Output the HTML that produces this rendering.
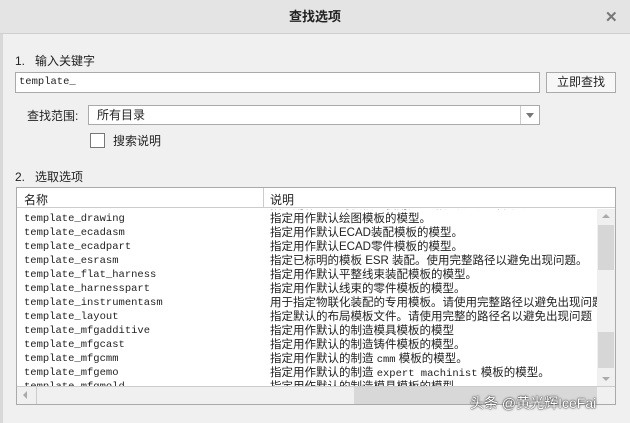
<!DOCTYPE html>
<html><head><meta charset="utf-8"><style>
*{margin:0;padding:0;box-sizing:border-box}
body{width:630px;height:423px;background:#f0f0f0;font-family:"Liberation Sans","Noto Sans CJK SC",sans-serif;font-size:12px;color:#222;position:relative;overflow:hidden}
.a{position:absolute}
.title{left:0;top:0;width:630px;height:34px;background:#e4e4e4;border-bottom:1px solid #cfcfcf;text-align:center;line-height:34px;font-weight:bold;font-size:13px}
.mono{font-family:"Liberation Mono","Noto Sans CJK SC",monospace;font-size:10.5px}
.row{height:14px;line-height:14px;white-space:nowrap}
</style></head><body>
<div class="a" style="left:0;top:0;width:3px;height:423px;background:#d8d8d8"></div>
<div class="a title">查找选项</div>
<div class="a" style="left:605px;top:8px;font-size:15px;font-weight:bold;color:#777">✕</div>
<div class="a" style="left:15px;top:52px">1.&nbsp;&nbsp;&nbsp;输入关键字</div>
<div class="a mono" style="left:15px;top:72px;width:525px;height:21px;background:#fff;border:1px solid #aaa;padding-left:3px;line-height:19px">template_</div>
<div class="a" style="left:546px;top:72px;width:70px;height:21px;background:#f7f7f7;border:1px solid #aaa;text-align:center;line-height:19px">立即查找</div>
<div class="a" style="left:27px;top:107px">查找范围:</div>
<div class="a" style="left:88px;top:105px;width:452px;height:20px;background:#fff;border:1px solid #aaa;padding-left:8px;line-height:18px">所有目录</div>
<div class="a" style="left:520px;top:106px;width:1px;height:18px;background:#ccc"></div>
<div class="a" style="left:526px;top:113px;width:0;height:0;border-left:4px solid transparent;border-right:4px solid transparent;border-top:5px solid #777"></div>
<div class="a" style="left:90px;top:133px;width:15px;height:15px;background:#fff;border:1px solid #777"></div>
<div class="a" style="left:113px;top:132px">搜索说明</div>
<div class="a" style="left:15px;top:168px">2.&nbsp;&nbsp;&nbsp;选取选项</div>
<div class="a" style="left:16px;top:187px;width:600px;height:218px;background:#fff;border:1px solid #aaa"></div>
<div class="a" style="left:17px;top:188px;width:598px;height:20px;background:#fff;border-bottom:1px solid #ccc"></div>
<div class="a" style="left:24px;top:191px;font-size:12px">名称</div>
<div class="a" style="left:263px;top:188px;width:1px;height:20px;background:#ccc"></div>
<div class="a" style="left:270px;top:191px;font-size:12px">说明</div>
<div class="a" style="left:17px;top:209px;width:580px;height:177px;overflow:hidden">
<div style="position:absolute;left:7px;top:-11px" class="mono">
<div class="row">template_dwg</div><div class="row">template_drawing</div><div class="row">template_ecadasm</div><div class="row">template_ecadpart</div><div class="row">template_esrasm</div><div class="row">template_flat_harness</div><div class="row">template_harnesspart</div><div class="row">template_instrumentasm</div><div class="row">template_layout</div><div class="row">template_mfgadditive</div><div class="row">template_mfgcast</div><div class="row">template_mfgcmm</div><div class="row">template_mfgemo</div><div class="row">template_mfgmold</div></div>
<div style="position:absolute;left:253px;top:-11px;font-size:11.5px">
<div class="row">指定用作默认的模板。使用完整路径以避免出现问题</div>
<div class="row">指定用作默认绘图模板的模型。</div>
<div class="row">指定用作默认ECAD装配模板的模型。</div>
<div class="row">指定用作默认ECAD零件模板的模型。</div>
<div class="row">指定已标明的模板 ESR 装配。使用完整路径以避免出现问题。</div>
<div class="row">指定用作默认平整线束装配模板的模型。</div>
<div class="row">指定用作默认线束的零件模板的模型。</div>
<div class="row">用于指定物联化装配的专用模板。请使用完整路径以避免出现问题</div>
<div class="row">指定默认的布局模板文件。请使用完整的路径名以避免出现问题</div>
<div class="row">指定用作默认的制造模具模板的模型</div>
<div class="row">指定用作默认的制造铸件模板的模型。</div>
<div class="row">指定用作默认的制造 <span class="mono">cmm</span> 模板的模型。</div>
<div class="row">指定用作默认的制造 <span class="mono">expert machinist</span> 模板的模型。</div>
<div class="row">指定用作默认的制造模具模板的模型。</div></div>
</div>
<div class="a" style="left:597px;top:209px;width:18px;height:177px;background:#f0f0f0"></div>
<div class="a" style="left:598px;top:225px;width:16px;height:45px;background:#d6d6d6"></div>
<div class="a" style="left:598px;top:332px;width:16px;height:36px;background:#d6d6d6"></div>
<div class="a" style="left:602px;top:214px;width:0;height:0;border-left:4px solid transparent;border-right:4px solid transparent;border-bottom:4px solid #aaa"></div>
<div class="a" style="left:602px;top:377px;width:0;height:0;border-left:4px solid transparent;border-right:4px solid transparent;border-top:4px solid #aaa"></div>
<div class="a" style="left:17px;top:386px;width:598px;height:18px;background:#f0f0f0;border-top:1px solid #ccc"></div>
<div class="a" style="left:36px;top:387px;width:8px;height:17px;border-left:1px solid #ccc"></div>
<div class="a" style="left:354px;top:387px;width:243px;height:17px;background:#d8d8d8"></div>
<div class="a" style="left:23px;top:391px;width:0;height:0;border-top:4px solid transparent;border-bottom:4px solid transparent;border-right:4px solid #aaa"></div>
<div class="a" style="left:470px;top:393px;color:#fff;font-size:14px;text-shadow:0 0 2px #333,0 0 1px #000">头条 @黄光辉IceFai</div>
</body></html>
